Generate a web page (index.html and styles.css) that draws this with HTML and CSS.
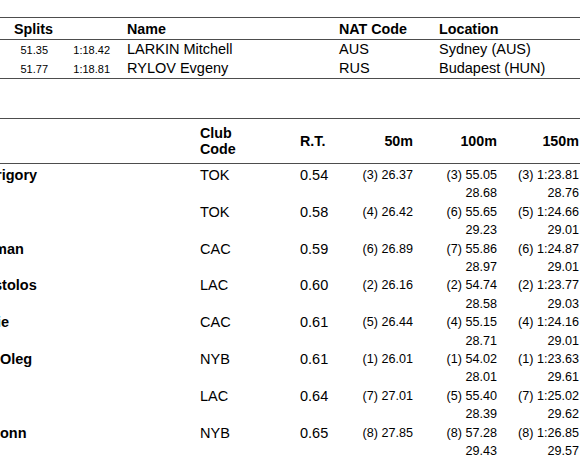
FILE: index.html
```html
<!DOCTYPE html>
<html lang="en">
<head>
<meta charset="utf-8">
<title>Results</title>
<link rel="stylesheet" href="styles.css">
</head>
<body>
<main class="page">
  <section class="records">
    <div class="rec-row rec-head">
      <div class="c-splits">Splits</div>
      <div class="c-name">Name</div>
      <div class="c-nat">NAT Code</div>
      <div class="c-loc">Location</div>
    </div>
    <div class="rec-body">
      <div class="rec-row">
        <div class="c-s1">51.35</div>
        <div class="c-s2">1:18.42</div>
        <div class="c-name">LARKIN Mitchell</div>
        <div class="c-nat">AUS</div>
        <div class="c-loc">Sydney (AUS)</div>
      </div>
      <div class="rec-row">
        <div class="c-s1">51.77</div>
        <div class="c-s2">1:18.81</div>
        <div class="c-name">RYLOV Evgeny</div>
        <div class="c-nat">RUS</div>
        <div class="c-loc">Budapest (HUN)</div>
      </div>
    </div>
  </section>

  <section class="results">
    <div class="res-head">
      <div class="h-name"></div>
      <div class="h-club">Club<br>Code</div>
      <div class="h-rt">R.T.</div>
      <div class="h-split">50m</div>
      <div class="h-split">100m</div>
      <div class="h-split">150m</div>
    </div>
    <div class="res-body">
      <div class="res-row">
        <div class="r-name cut-4">rigory</div>
        <div class="r-club">TOK</div>
        <div class="r-rt">0.54</div>
        <div class="r-split"><span>(3) 26.37</span></div>
        <div class="r-split"><span>(3) 55.05</span><span>28.68</span></div>
        <div class="r-split"><span>(3) 1:23.81</span><span>28.76</span></div>
      </div>
      <div class="res-row">
        <div class="r-name"></div>
        <div class="r-club">TOK</div>
        <div class="r-rt">0.58</div>
        <div class="r-split"><span>(4) 26.42</span></div>
        <div class="r-split"><span>(6) 55.65</span><span>29.23</span></div>
        <div class="r-split"><span>(5) 1:24.66</span><span>29.01</span></div>
      </div>
      <div class="res-row">
        <div class="r-name cut-6">man</div>
        <div class="r-club">CAC</div>
        <div class="r-rt">0.59</div>
        <div class="r-split"><span>(6) 26.89</span></div>
        <div class="r-split"><span>(7) 55.86</span><span>28.97</span></div>
        <div class="r-split"><span>(6) 1:24.87</span><span>29.01</span></div>
      </div>
      <div class="res-row">
        <div class="r-name cut-6">stolos</div>
        <div class="r-club">LAC</div>
        <div class="r-rt">0.60</div>
        <div class="r-split"><span>(2) 26.16</span></div>
        <div class="r-split"><span>(2) 54.74</span><span>28.58</span></div>
        <div class="r-split"><span>(2) 1:23.77</span><span>29.03</span></div>
      </div>
      <div class="res-row">
        <div class="r-name cut-3">ie</div>
        <div class="r-club">CAC</div>
        <div class="r-rt">0.61</div>
        <div class="r-split"><span>(5) 26.44</span></div>
        <div class="r-split"><span>(4) 55.15</span><span>28.71</span></div>
        <div class="r-split"><span>(4) 1:24.16</span><span>29.01</span></div>
      </div>
      <div class="res-row">
        <div class="r-name">Oleg</div>
        <div class="r-club">NYB</div>
        <div class="r-rt">0.61</div>
        <div class="r-split"><span>(1) 26.01</span></div>
        <div class="r-split"><span>(1) 54.02</span><span>28.01</span></div>
        <div class="r-split"><span>(1) 1:23.63</span><span>29.61</span></div>
      </div>
      <div class="res-row">
        <div class="r-name"></div>
        <div class="r-club">LAC</div>
        <div class="r-rt">0.64</div>
        <div class="r-split"><span>(7) 27.01</span></div>
        <div class="r-split"><span>(5) 55.40</span><span>28.39</span></div>
        <div class="r-split"><span>(7) 1:25.02</span><span>29.62</span></div>
      </div>
      <div class="res-row">
        <div class="r-name">onn</div>
        <div class="r-club">NYB</div>
        <div class="r-rt">0.65</div>
        <div class="r-split"><span>(8) 27.85</span></div>
        <div class="r-split"><span>(8) 57.28</span><span>29.43</span></div>
        <div class="r-split"><span>(8) 1:26.85</span><span>29.57</span></div>
      </div>
    </div>
  </section>
</main>
</body>
</html>
```

FILE: styles.css
```css
html, body {
  margin: 0;
  padding: 0;
  background: #ffffff;
}

body {
  width: 580px;
  height: 460px;
  overflow: hidden;
  color: #000000;
  font-family: "Liberation Sans", Arial, Helvetica, sans-serif;
  font-size: 14.5px;
}

.page {
  display: flex;
  flex-direction: column;
}

/* ---------- Records table ---------- */
.records {
  margin-top: 17px;
  border-top: 1px solid #4d4d4d;
  border-bottom: 1px solid #4d4d4d;
}

.rec-row {
  display: grid;
  grid-template-columns: 48px 79px 212px 100px 1fr;
  grid-template-rows: 19px;
  align-items: baseline;
  height: 19px;
  line-height: 19px;
  overflow: hidden;
}

.rec-head {
  font-weight: bold;
  font-size: 14.3px;
  grid-template-rows: 20px;
  height: 20px;
  line-height: 20px;
  padding-top: 1px;
  border-bottom: 1px solid #4d4d4d;
}

.rec-head .c-splits {
  grid-column: 1 / 3;
  padding-left: 14px;
}

.c-s1,
.c-s2 {
  font-size: 11px;
  text-align: right;
}

.c-s2 {
  padding-right: 17px;
}

/* ---------- Results table ---------- */
.results {
  margin-top: 39px;
  border-top: 1px solid #4d4d4d;
}

.res-head,
.res-row {
  display: grid;
  grid-template-columns: 200px 100px 30px 83px 84px 82px 1fr;
}

.res-head {
  font-weight: bold;
  font-size: 14.3px;
  line-height: 16px;
  padding: 6px 0;
  border-bottom: 1px solid #4d4d4d;
  align-items: center;
}

.h-split {
  text-align: right;
}

.res-body {
  padding-top: 2px;
}

.res-row {
  line-height: 18.4px;
  height: 36.8px;
  align-items: start;
}

.r-name {
  font-weight: bold;
  white-space: nowrap;
}

.cut-3 { margin-left: -3px; }
.cut-4 { margin-left: -4px; }
.cut-6 { margin-left: -6px; }

.r-split {
  display: flex;
  flex-direction: column;
  align-items: flex-end;
  font-size: 12.6px;
}
```
